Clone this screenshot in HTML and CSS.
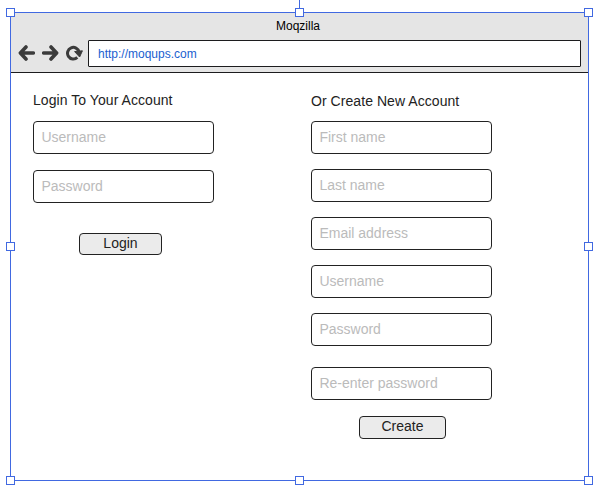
FILE: index.html
```html
<!DOCTYPE html>
<html lang="en">
<head>
<meta charset="utf-8">
<title>Moqzilla</title>
<link rel="stylesheet" href="styles.css">
</head>
<body>
<div class="window">
  <header class="chrome">
    <div class="title">Moqzilla</div>
    <div class="toolbar">
      <svg class="icon" width="17" height="16" viewBox="0 0 17 16"><path d="M15.3 8H3M8 2L2.4 8L8 14"/></svg>
      <svg class="icon forward" width="17" height="16" viewBox="0 0 17 16"><path d="M1.7 8H14M9 2l5.6 6L9 14"/></svg>
      <svg class="icon reload" width="17" height="16" viewBox="0 0 17 16"><path d="M11.3 12.4A5.8 5.8 0 1 1 13 7"/><path class="tip" d="M8.6 6.6L16.4 5.8L13.6 12z"/></svg>
      <div class="address"><span>http://moqups.com</span></div>
    </div>
  </header>
  <main class="page">
    <section class="login">
      <h2><span>Login To Your Account</span></h2>
      <div class="field">Username</div>
      <div class="field">Password</div>
      <button class="button">Login</button>
    </section>
    <section class="create">
      <h2><span>Or Create New Account</span></h2>
      <div class="field">First name</div>
      <div class="field">Last name</div>
      <div class="field">Email address</div>
      <div class="field">Username</div>
      <div class="field">Password</div>
      <div class="field repeat">Re-enter password</div>
      <button class="button">Create</button>
    </section>
  </main>
  <i class="stem"></i>
  <i class="handle top left"></i><i class="handle top center"></i><i class="handle top right"></i>
  <i class="handle middle left"></i><i class="handle middle right"></i>
  <i class="handle bottom left"></i><i class="handle bottom center"></i><i class="handle bottom right"></i>
</div>
</body>
</html>
```

FILE: styles.css
```css
* { box-sizing: border-box; }
body {
  height: 494px;
  margin: 0;
  padding: 12px 0 0 10px;
  background: #fff;
  color: #222;
  font: 14px/18px "Liberation Sans", Arial, sans-serif;
}
.window {
  position: relative;
  width: 579px;
  height: 469px;
  border: 1px solid #4169e1;
}
.chrome {
  height: 60px;
  background: #e5e5e5;
  border-bottom: 1px solid #1c1c1e;
}
.title {
  height: 27px;
  padding-right: 3px;
  color: #000;
  font-size: 12px;
  line-height: 26px;
  text-align: center;
}
.toolbar {
  display: flex;
  align-items: center;
  height: 27px;
  padding: 0 7px;
}
.icon {
  flex: none;
  fill: none;
  stroke: #3b3b3b;
  stroke-width: 3.6;
  stroke-linecap: round;
  stroke-linejoin: round;
  margin: 0 7px 1px 0;
}
.reload {
  margin-right: 5px;
  stroke-width: 3;
  stroke-linecap: butt;
}
.tip { fill: #3b3b3b; stroke-width: 1; }
.address {
  flex: 1;
  height: 27px;
  padding-left: 9px;
  background: #fff;
  border: 1px solid #1c1c1e;
  border-radius: 1px;
  color: #1a5fd0;
  font-size: 12px;
  line-height: 26px;
}
.page {
  display: flex;
  gap: 97px;
  padding: 18px 0 0 22px;
}
section {
  display: flex;
  flex-direction: column;
  width: 181px;
}
h2 {
  height: 30px;
  margin: 0;
  font-size: 14px;
  font-weight: normal;
  letter-spacing: 0.06px;
  white-space: nowrap;
}
.create h2 { padding-top: 1px; }
.field {
  height: 33px;
  padding-left: 7.4px;
  border: 1px solid #222;
  border-radius: 4px;
  color: #bbb;
  line-height: 30px;
}
.login .field + .field { margin-top: 16px; }
.create .field + .field { margin-top: 15px; }
.create .field + .repeat { margin-top: 21px; }
.button {
  width: 83px;
  height: 22px;
  margin: 30px 0 0 46px;
  padding: 0 0 2px;
  background: #ebebeb;
  border: 1px solid #222;
  border-radius: 4px;
  color: #222;
  font: inherit;
}
.create .button {
  width: 87px;
  height: 23px;
  margin: 16px 0 0 48px;
  padding-bottom: 3px;
}
.handle {
  position: absolute;
  width: 9px;
  height: 9px;
  background: #fff;
  border: 1px solid #4169e1;
}
.top { top: -5px; }
.middle { top: 229px; }
.bottom { bottom: -5px; }
.left { left: -5px; }
.center { left: 284px; }
.right { right: -5px; }
.stem {
  position: absolute;
  left: 288px;
  top: -13px;
  width: 1px;
  height: 8px;
  background: #4169e1;
}
```
